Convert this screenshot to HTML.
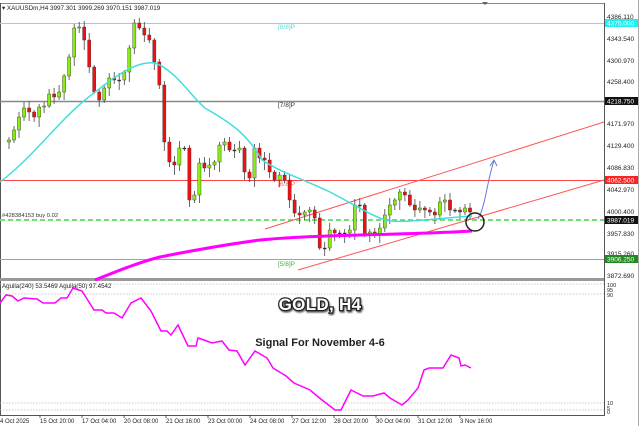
<!DOCTYPE html>
<html><head><meta charset="utf-8">
<style>
html,body{margin:0;padding:0;background:#fff;width:640px;height:426px;overflow:hidden}
svg{display:block;font-family:"Liberation Sans",sans-serif}
.ax{font-size:6.5px;fill:#222}
.tl{font-size:6px;fill:#222}
</style></head><body>
<svg id="s" width="640" height="426" viewBox="0 0 640 426" xmlns="http://www.w3.org/2000/svg">
<rect x="0" y="0" width="640" height="426" fill="#fff"/>
<!-- frames -->
<line x1="0" y1="3.5" x2="604" y2="3.5" stroke="#888" stroke-width="1"/>
<line x1="604.5" y1="3" x2="604.5" y2="416" stroke="#555" stroke-width="1"/>
<line x1="638.5" y1="0" x2="638.5" y2="426" stroke="#aaa" stroke-width="1"/>
<line x1="0.5" y1="3" x2="0.5" y2="416" stroke="#555" stroke-width="1"/>
<rect x="0" y="278" width="604" height="3" fill="#999"/>
<line x1="0" y1="415.5" x2="604" y2="415.5" stroke="#555" stroke-width="1"/>
<text x="2" y="10" class="tl" style="font-size:6.3px">▾ XAUUSDm,H4  3997.301  3999.269  3970.151  3987.019</text>
<path d="M482 2 l6 0 l-3 3z" fill="#567"/>

<!-- horizontal levels -->
<line x1="0" y1="23.5" x2="604" y2="23.5" stroke="#5ee" stroke-width="1"/>
<line x1="0" y1="101.5" x2="604" y2="101.5" stroke="#888" stroke-width="1.5"/>
<line x1="0" y1="180.5" x2="604" y2="180.5" stroke="#f44" stroke-width="1"/>
<line x1="0" y1="220" x2="604" y2="220" stroke="#7d7" stroke-width="2" stroke-dasharray="5,3"/>
<line x1="0" y1="259.5" x2="604" y2="259.5" stroke="#6c6" stroke-width="1"/>
<text x="278" y="29" style="font-size:6.5px" fill="#5dd">[8/8]P</text>
<text x="278" y="107" style="font-size:6.5px" fill="#333">[7/8]P</text>
<text x="278" y="186" style="font-size:6.5px" fill="#f66">[6/8]P</text>
<text x="278" y="266" style="font-size:6.5px" fill="#4a4">[5/8]P</text>
<text x="2" y="217" style="font-size:5.8px" fill="#333">#428384153 buy 0.02</text>

<!-- channel -->
<line x1="265" y1="229" x2="604" y2="122" stroke="#f55" stroke-width="1"/>
<line x1="298" y1="270" x2="604" y2="180" stroke="#f55" stroke-width="1"/>

<g id="candles"></g>

<!-- MAs -->
<path d="M0,182 C30,160 60,120 85,100 C110,80 135,60 155,63 C175,70 190,95 205,108 C225,120 245,130 262,160 C280,172 300,178 330,192 C355,205 370,215 385,220 C400,224 440,218 472,216" fill="none" stroke="#4dd" stroke-width="1.5"/>
<path d="M95,280 C120,270 140,262 160,257 C190,251 230,244 260,240 C290,237 320,236 360,235 C400,234 440,233 472,231" fill="none" stroke="#f0f" stroke-width="3"/>

<!-- arrow + circle -->
<path d="M478,219 C486,205 487,180 494,161" fill="none" stroke="#67d" stroke-width="1"/>
<path d="M490,166 L494,160 L497,166" fill="none" stroke="#67d" stroke-width="1"/>
<circle cx="475" cy="222" r="9" fill="none" stroke="#222" stroke-width="1.5"/>

<!-- price axis -->
<g class="ax">
<text x="607" y="19">4386.110</text>
<rect x="605" y="19" width="33" height="8" fill="#2ee"/><text x="607" y="25.5" fill="#fff">4375.000</text>
<text x="607" y="41">4343.540</text>
<text x="607" y="63">4300.970</text>
<text x="607" y="84">4258.400</text>
<rect x="605" y="97" width="33" height="8" fill="#111"/><text x="607" y="103.5" fill="#fff">4218.750</text>
<text x="607" y="126">4171.970</text>
<text x="607" y="148">4129.400</text>
<text x="607" y="170">4086.830</text>
<rect x="605" y="176" width="33" height="8" fill="#f22"/><text x="607" y="182.5" fill="#fff">4062.500</text>
<text x="607" y="192">4042.970</text>
<text x="607" y="214">4000.400</text>
<rect x="605" y="216" width="33" height="8" fill="#111"/><text x="607" y="222.5" fill="#fff">3987.019</text>
<text x="607" y="236">3957.830</text>
<text x="607" y="256">3915.260</text>
<rect x="605" y="255" width="33" height="8" fill="#282"/><text x="607" y="261.5" fill="#fff">3906.250</text>
<text x="607" y="278">3872.690</text>
</g>
<g style="font-size:5.5px" fill="#222">
<text x="607" y="287">100</text><text x="607" y="292">95</text><text x="607" y="297">90</text>
<text x="607" y="405">10</text><text x="607" y="410">5</text><text x="607" y="414">0</text>
</g>

<!-- indicator pane -->
<line x1="0" y1="284" x2="604" y2="284" stroke="#bbb" stroke-dasharray="1.5,1.5" stroke-width="0.7"/>
<line x1="0" y1="294" x2="604" y2="294" stroke="#bbb" stroke-dasharray="1.5,1.5" stroke-width="0.7"/>
<line x1="0" y1="403" x2="604" y2="403" stroke="#bbb" stroke-dasharray="1.5,1.5" stroke-width="0.7"/>
<line x1="0" y1="410" x2="604" y2="410" stroke="#bbb" stroke-dasharray="1.5,1.5" stroke-width="0.7"/>
<text x="2" y="288" style="font-size:6.2px" fill="#222">Aguila(240) 53.5469  Aguila(50) 97.4542</text>
<polyline fill="none" stroke="#f0f" stroke-width="1.5" points="0,303 6,295 12,296 18,301 24,298 37,299 43,303 55,303 61,298 67,298 73,288 82,291 94,310 102,310 106,313 114,313 122,318 131,303 141,298 151,311 161,331 167,331 171,335 178,325 188,346 196,346 198,338 204,340 212,343 222,341 229,350 237,351 245,365 255,351 267,358 273,368 286,376 294,383 310,390 322,400 335,410 341,410 351,390 363,396 373,396 384,393 390,398 402,405 408,400 418,388 424,370 429,368 443,368 451,355 459,358 461,366 465,365 471,368"/>
<text x="320" y="310" text-anchor="middle" style="font-size:17px;font-weight:bold;paint-order:stroke;letter-spacing:0.3px" fill="#fff" stroke="#222" stroke-width="2.5" filter="url(#sh)">GOLD, H4</text>
<text x="320" y="346" text-anchor="middle" style="font-size:11px;font-weight:bold;paint-order:stroke" fill="#222" stroke="#fff" stroke-width="2">Signal For November 4-6</text>
<defs><filter id="sh"><feDropShadow dx="1" dy="1.5" stdDeviation="0.8" flood-color="#000" flood-opacity="0.6"/></filter></defs>

<!-- time axis -->
<g class="tl">
<text x="0" y="423">4 Oct 2025</text>
<text x="40" y="423">15 Oct 20:00</text>
<text x="82" y="423">17 Oct 04:00</text>
<text x="124" y="423">20 Oct 08:00</text>
<text x="166" y="423">21 Oct 16:00</text>
<text x="208" y="423">23 Oct 00:00</text>
<text x="250" y="423">24 Oct 08:00</text>
<text x="292" y="423">27 Oct 12:00</text>
<text x="334" y="423">28 Oct 20:00</text>
<text x="376" y="423">30 Oct 04:00</text>
<text x="418" y="423">31 Oct 12:00</text>
<text x="460" y="423">3 Nov 16:00</text>
</g>
<g stroke="#333" stroke-width="0.8">
<line x1="40" y1="415" x2="40" y2="418"/><line x1="82" y1="415" x2="82" y2="418"/><line x1="124" y1="415" x2="124" y2="418"/><line x1="166" y1="415" x2="166" y2="418"/><line x1="208" y1="415" x2="208" y2="418"/><line x1="250" y1="415" x2="250" y2="418"/><line x1="292" y1="415" x2="292" y2="418"/><line x1="334" y1="415" x2="334" y2="418"/><line x1="376" y1="415" x2="376" y2="418"/><line x1="418" y1="415" x2="418" y2="418"/><line x1="460" y1="415" x2="460" y2="418"/>
</g>
</svg>
<script>
(function(){
var c=[142,140,130,117,108,112,117,107,106,94,97,92,76,57,28,27,40,67,92,100,88,78,80,80,72,48,23,28,35,40,62,85,142,162,165,148,148,200,195,163,168,165,162,145,142,150,150,148,172,178,148,158,160,172,180,175,180,200,213,215,212,210,218,248,248,230,233,233,233,230,205,205,235,232,235,228,215,205,200,192,195,205,210,208,210,212,215,202,200,210,210,212,208,212];
var g=document.getElementById('candles'),ns='http://www.w3.org/2000/svg',h='';
var n=c.length, x0=4, step=(470-4)/(n-1);
for(var i=1;i<n;i++){
 var x=x0+i*step, o=c[i-1], cl=c[i];
 var top=Math.min(o,cl), bot=Math.max(o,cl);
 if(bot-top<1){bot=top+1;}
 var hi=top-2-((i*7)%6), lo=bot+2+((i*5)%9);
 h+='<line x1="'+x.toFixed(1)+'" y1="'+hi+'" x2="'+x.toFixed(1)+'" y2="'+lo+'" stroke="#444" stroke-width="0.8"/>';
 var up=cl<o, eq=Math.abs(cl-o)<1;
 var fill=eq?'#333':(up?'#8e1':'#e11');
 h+='<rect x="'+(x-1.6).toFixed(1)+'" y="'+top+'" width="3.2" height="'+(bot-top)+'" fill="'+fill+'" stroke="#333" stroke-width="0.4"/>';
}
g.innerHTML=h;
})();
</script>
</body></html>
